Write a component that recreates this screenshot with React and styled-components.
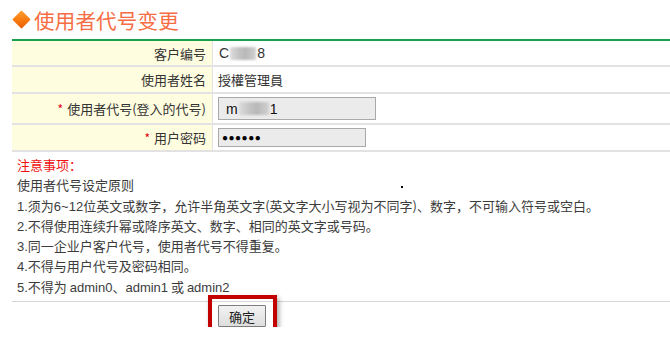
import React from 'react'
import styled, { createGlobalStyle } from 'styled-components'

const Global = createGlobalStyle`
  body {
    margin: 0;
    background: #fff;
    font-family: "Liberation Sans", Arial, "Noto Sans CJK SC", sans-serif;
    font-size: 13px;
    color: #333;
  }
`

const Page = styled.div`
  padding-left: 12px;
  width: 658px;
`

const Header = styled.div`
  height: 39px;
  display: flex;
  align-items: center;
  gap: 2px;
`

const Diamond = styled.span`
  width: 13px;
  height: 13px;
  margin: 0 4px 0 3px;
  transform: rotate(45deg);
  background: linear-gradient(135deg, #ffa030 0%, #f77a10 55%, #e85c00 100%);
  border-radius: 1px;
  flex-shrink: 0;
`

const Title = styled.h2`
  margin: 0;
  font-family: "Noto Sans CJK SC", "Liberation Sans", sans-serif;
  font-weight: 400;
  font-size: 20.5px;
  color: #f66d44;
  letter-spacing: 0.2px;
`

const Table = styled.div`
  border-top: 2px solid #19a04b;
`

const Row = styled.div`
  box-sizing: border-box;
  display: grid;
  grid-template-columns: 201px 1fr;
  height: ${p => p.$h}px;
  border-bottom: 2px solid #e2e2e2;
`

const Label = styled.div`
  background: #fffde0;
  border-right: 1px solid #e2e2e2;
  display: flex;
  align-items: center;
  justify-content: flex-end;
  padding-right: 6px;
  font-family: "Noto Sans CJK SC", sans-serif;
  color: #333;
`

const Star = styled.span`
  color: #e60012;
  font-size: 12px;
  align-self: flex-start;
  margin: ${p => p.$top}px 4px 0 0;
`

const Value = styled.div`
  display: flex;
  align-items: center;
  padding-left: 5px;
  font-family: "Noto Sans CJK SC", sans-serif;
  color: #333;
`

const Plain = styled.span`
  font-family: "Liberation Sans", Arial, sans-serif;
  font-size: 14px;
  padding-left: ${p => p.$pl || 0}px;
  display: flex;
  align-items: center;
`

const Blur = styled.span`
  display: inline-block;
  width: ${p => p.$w}px;
  height: 13px;
  margin: 0 1px;
  background: linear-gradient(90deg, #dcdcdc 0%, #c4c4c4 35%, #b8b8b8 60%, #d2d2d2 100%);
  filter: blur(1.2px);
`

const Field = styled.div`
  box-sizing: border-box;
  width: ${p => p.$w}px;
  height: ${p => p.$h}px;
  background: #ebebeb;
  border: 1px solid #a9a9a9;
  display: flex;
  align-items: center;
  padding-left: ${p => p.$pl}px;
  font-family: "Liberation Sans", Arial, sans-serif;
  font-size: 14px;
  color: #111;
`

const Dots = styled.span`
  font-size: 10px;
  letter-spacing: 0.5px;
  color: #000;
`

const Notes = styled.div`
  padding: 3px 0 4px 5px;
  font-family: "Noto Sans CJK SC", sans-serif;
  color: #3c3c3c;
  border-bottom: 1px solid #d6d6d6;
`

const Line = styled.div`
  height: 20.3px;
  line-height: 20px;
  white-space: nowrap;
  color: ${p => (p.$warn ? '#f01010' : 'inherit')};
`

const Num = styled.span`
  font-family: "Liberation Sans", Arial, sans-serif;
  line-height: 1;
`

const Speck = styled.span`
  display: inline-block;
  width: 2px;
  height: 2px;
  background: #000;
  margin-left: 267px;
  vertical-align: middle;
`

const Footer = styled.div`
  display: flex;
  padding: 3px 0 0 206px;
`

const Button = styled.button`
  position: relative;
  width: 48px;
  height: 22px;
  padding: 0;
  font-family: "Noto Sans CJK SC", sans-serif;
  font-size: 13px;
  color: #222;
  background: linear-gradient(#f2f2f2, #dedede);
  border: 1px solid #7d7d7d;
  border-radius: 1px;

  &::after {
    content: '';
    position: absolute;
    left: -11px;
    top: -11px;
    right: -12px;
    bottom: -9px;
    border: 4px solid #c20000;
    box-shadow: 2px 3px 5px rgba(0, 0, 0, 0.35);
  }
`

const App = () => {
  return (
    <>
      <Global />
      <Page>
        <Header>
          <Diamond />
          <Title>使用者代号变更</Title>
        </Header>
        <Table>
          <Row $h={26}>
            <Label>客户编号</Label>
            <Value>
              <Plain $pl={1}>C<Blur $w={26} />8</Plain>
            </Value>
          </Row>
          <Row $h={27}>
            <Label>使用者姓名</Label>
            <Value>授權管理員</Value>
          </Row>
          <Row $h={31}>
            <Label><Star $top={6}>*</Star>使用者代号(登入的代号)</Label>
            <Value>
              <Field $w={158} $h={23} $pl={7}>m<Blur $w={30} />1</Field>
            </Value>
          </Row>
          <Row $h={27}>
            <Label><Star $top={4}>*</Star>用户密码</Label>
            <Value>
              <Field $w={148} $h={19} $pl={3}><Dots>●●●●●●</Dots></Field>
            </Value>
          </Row>
        </Table>
        <Notes>
          <Line $warn>注意事项：</Line>
          <Line>使用者代号设定原则<Speck /></Line>
          <Line><Num>1.</Num>须为<Num>6~12</Num>位英文或数字，允许半角英文字(英文字大小写视为不同字)、数字，不可输入符号或空白。</Line>
          <Line><Num>2.</Num>不得使用连续升幂或降序英文、数字、相同的英文字或号码。</Line>
          <Line><Num>3.</Num>同一企业户客户代号，使用者代号不得重复。</Line>
          <Line><Num>4.</Num>不得与用户代号及密码相同。</Line>
          <Line><Num>5.</Num>不得为 <Num>admin0</Num>、<Num>admin1</Num> 或 <Num>admin2</Num></Line>
        </Notes>
        <Footer>
          <Button>确定</Button>
        </Footer>
      </Page>
    </>
  )
}

export default App
